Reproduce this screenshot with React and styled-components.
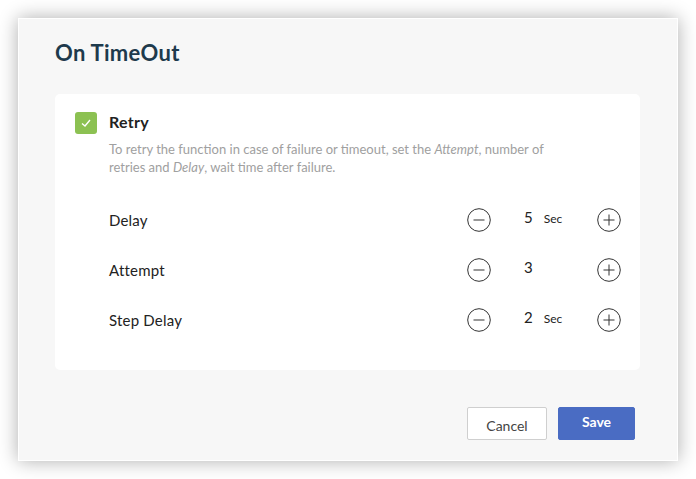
import React from "react";
import styled, { createGlobalStyle } from "styled-components";

const Global = createGlobalStyle`
  html, body { margin: 0; padding: 0; background: #fff; }
  body { font-family: "Lato", "Liberation Sans", sans-serif; }
  * { box-sizing: border-box; }
`;

const Page = styled.div`
  padding: 18px;
  width: 696px;
  height: 479px;
`;

const Dialog = styled.div`
  width: 660px;
  height: 443px;
  background: #f7f7f7;
  border: 1px solid #fff;
  box-shadow: 0 0 18px rgba(0, 0, 0, 0.32);
  padding: 18px 37px 20px 36px;
  display: flex;
  flex-direction: column;
`;

const Title = styled.h1`
  margin: 0;
  font-size: 22px;
  line-height: 32px;
  font-weight: 700;
  letter-spacing: 0.3px;
  color: #1e3a4c;
  height: 57px;
`;

const Card = styled.div`
  background: #fff;
  border-radius: 5px;
  padding: 18px 19px 25px 20px;
`;

const Head = styled.div`
  display: grid;
  grid-template-columns: 22px 1fr;
  column-gap: 12px;
`;

const Check = styled.div`
  width: 22px;
  height: 22px;
  border-radius: 3px;
  background: #8cc152;
  display: flex;
  align-items: center;
  justify-content: center;
`;

const RetryLabel = styled.div`
  font-size: 16px;
  line-height: 22px;
  font-weight: 700;
  letter-spacing: 0.3px;
  color: #222;
  margin-top: -1px;
`;

const Desc = styled.p`
  grid-column: 2;
  margin: 6px 0 0;
  font-size: 13px;
  line-height: 18px;
  color: #a0a0a0;
  max-width: 445px;
  em { font-style: italic; }
`;

const Rows = styled.div`
  margin-top: 19px;
  padding-left: 34px;
`;

const Row = styled.div`
  display: flex;
  align-items: center;
  justify-content: space-between;
  height: 50px;
`;

const Label = styled.div`
  font-size: 15px;
  letter-spacing: 0.2px;
  color: #222;
`;

const Stepper = styled.div`
  display: grid;
  grid-template-columns: 24px 106px 24px;
  align-items: center;
`;

const CircleBtn = styled.button`
  width: 24px;
  height: 24px;
  padding: 0;
  border: none;
  background: none;
  display: flex;
  cursor: pointer;
`;

const Value = styled.div`
  padding-left: 33px;
  display: flex;
  align-items: baseline;
  gap: 11px;
  margin-top: -6px;
  color: #222;
`;

const Num = styled.span`
  font-size: 15px;
`;

const Unit = styled.span`
  font-size: 12px;
`;

const Footer = styled.div`
  margin-top: auto;
  display: flex;
  justify-content: flex-end;
  gap: 11px;
  padding-right: 5px;
`;

const Button = styled.button`
  height: 33px;
  width: ${(p) => p.$w}px;
  border-radius: 2px;
  font-family: inherit;
  font-size: 14px;
  cursor: pointer;
  border: 1px solid ${(p) => (p.$primary ? "#4a6cc3" : "#cfcfcf")};
  background: ${(p) => (p.$primary ? "#4a6cc3" : "#fff")};
  color: ${(p) => (p.$primary ? "#fff" : "#444")};
  font-weight: ${(p) => (p.$primary ? 700 : 400)};
  padding: ${(p) => (p.$primary ? "0 0 4px" : "4px 0 0")};
`;

const Circle = ({ plus }) => (
  <svg width="24" height="24" viewBox="0 0 24 24" fill="none" stroke="#333" strokeWidth="1">
    <circle cx="12" cy="12" r="11.3" />
    <line x1="6.5" y1="12" x2="17.5" y2="12" />
    {plus && <line x1="12" y1="6.5" x2="12" y2="17.5" />}
  </svg>
);

const data = [
  { label: "Delay", value: 5, unit: "Sec" },
  { label: "Attempt", value: 3 },
  { label: "Step Delay", value: 2, unit: "Sec" },
];

export default function App() {
  return (
    <Page>
      <Global />
      <Dialog>
        <Title>On TimeOut</Title>
        <Card>
          <Head>
            <Check>
              <svg width="12" height="12" viewBox="0 0 12 12" fill="none" stroke="#fff" strokeWidth="1.4">
                <polyline points="2,6.5 5,9 10,3" />
              </svg>
            </Check>
            <RetryLabel>Retry</RetryLabel>
            <Desc>
              To retry the function in case of failure or timeout, set the <em>Attempt</em>, number of
              retries and <em>Delay</em>, wait time after failure.
            </Desc>
          </Head>
          <Rows>
            {data.map((d) => (
              <Row key={d.label}>
                <Label>{d.label}</Label>
                <Stepper>
                  <CircleBtn aria-label="decrease"><Circle /></CircleBtn>
                  <Value>
                    <Num>{d.value}</Num>
                    {d.unit && <Unit>{d.unit}</Unit>}
                  </Value>
                  <CircleBtn aria-label="increase"><Circle plus /></CircleBtn>
                </Stepper>
              </Row>
            ))}
          </Rows>
        </Card>
        <Footer>
          <Button $w={80}>Cancel</Button>
          <Button $w={77} $primary>Save</Button>
        </Footer>
      </Dialog>
    </Page>
  );
}
